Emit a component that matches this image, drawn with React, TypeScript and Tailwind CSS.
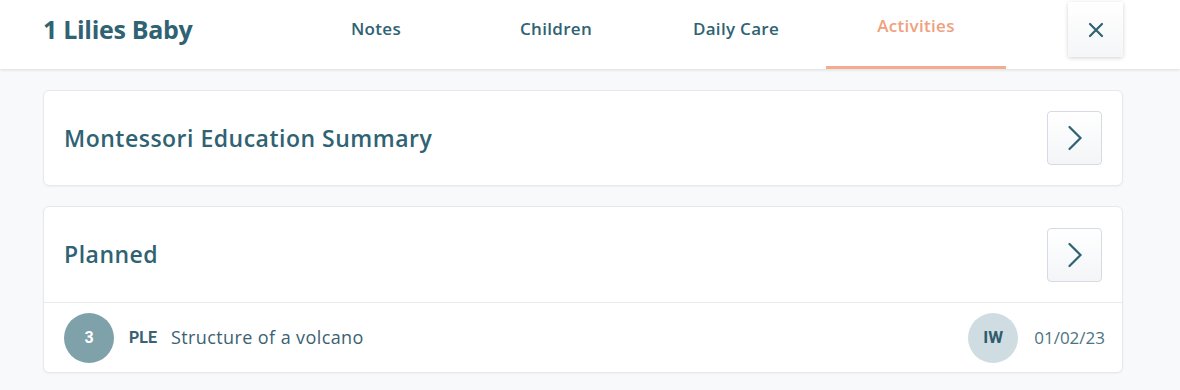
const ChevronRight = () => (
  <svg width="16" height="26" viewBox="0 0 16 26" fill="none" stroke="#2f6273" strokeWidth="2.2" strokeLinecap="round">
    <path d="M2.5 2 L13.5 13 L2.5 24" />
  </svg>
);

const CloseIcon = () => (
  <svg width="16" height="16" viewBox="0 0 16 16" fill="none" stroke="#2f6273" strokeWidth="2.2" strokeLinecap="round">
    <path d="M2 2 L14 14 M14 2 L2 14" />
  </svg>
);

const tabs = ["Notes", "Children", "Daily Care", "Activities"];

const App = () => {
  return (
    <div className="min-h-[390px] bg-[#f8f9fb] font-['Open_Sans',sans-serif] text-[#2f6273]">
      {/* header */}
      <div className="flex h-[69px] items-start bg-white pl-[43px] pr-[57px] shadow-[0_1px_3px_rgba(0,0,0,0.12)]">
        <h1 className="mt-[11px] w-[243px] text-[25px] font-bold tracking-[-0.3px]">1 Lilies Baby</h1>
        <div className="flex">
          {tabs.map((t) => (
            <div
              key={t}
              className={
                t === "Activities"
                  ? "flex h-[69px] w-[180px] justify-center border-b-[3px] border-[#f5ab90] pt-[13px] text-[17px] font-semibold tracking-[0.3px] text-[#f0a07e]"
                  : "flex h-[69px] w-[180px] justify-center pt-[16px] text-[17px] font-semibold tracking-[0.3px]"
              }
            >
              {t}
            </div>
          ))}
        </div>
        <button className="ml-auto mt-[2px] flex h-[55px] w-[55px] items-center justify-center rounded-[2px] bg-gradient-to-b from-white to-[#f5f6f8] shadow-[0_1px_4px_rgba(0,0,0,0.18)]">
          <CloseIcon />
        </button>
      </div>

      <div className="flex flex-col gap-[20px] pl-[43px] pr-[57px] pt-[21px] pb-[18px]">
        {/* card 1 */}
        <div className="flex h-[96px] items-center justify-between rounded-[6px] border border-[#e6e8ee] bg-white pl-[20px] pr-[20px] shadow-[0_1px_2px_rgba(0,0,0,0.04)]">
          <h2 className="text-[23px] font-semibold tracking-[0.5px]">Montessori Education Summary</h2>
          <button className="flex h-[54px] w-[55px] items-center justify-center rounded-[4px] border border-[#d6dae3] bg-gradient-to-b from-white to-[#f3f5f7]">
            <ChevronRight />
          </button>
        </div>

        {/* card 2 */}
        <div className="rounded-[6px] border border-[#e6e8ee] bg-white shadow-[0_1px_2px_rgba(0,0,0,0.04)]">
          <div className="flex h-[96px] items-center justify-between border-b border-[#e8eaf0] pl-[20px] pr-[20px]">
            <h2 className="text-[23px] font-semibold tracking-[0.5px]">Planned</h2>
            <button className="flex h-[54px] w-[55px] items-center justify-center rounded-[4px] border border-[#d6dae3] bg-gradient-to-b from-white to-[#f3f5f7]">
              <ChevronRight />
            </button>
          </div>
          <div className="flex h-[69px] items-center pl-[20px] pr-[17px]">
            <div className="flex h-[50px] w-[50px] items-center justify-center rounded-full bg-[#7fa1aa] font-['Roboto',sans-serif] text-[16px] font-bold text-white">
              3
            </div>
            <span className="ml-[15px] font-['Roboto',sans-serif] text-[16px] font-bold text-[#3a6272]">PLE</span>
            <span className="ml-[14px] text-[18px] tracking-[0.4px] text-[#3a6272]">Structure of a volcano</span>
            <div className="ml-auto flex h-[50px] w-[50px] items-center justify-center rounded-full bg-[#cfdde2] font-['Roboto',sans-serif] text-[17px] font-bold text-[#2f5b6a]">
              IW
            </div>
            <span className="ml-[16px] text-[17px] text-[#4b7384]">01/02/23</span>
          </div>
        </div>
      </div>
    </div>
  );
};

export default App;
